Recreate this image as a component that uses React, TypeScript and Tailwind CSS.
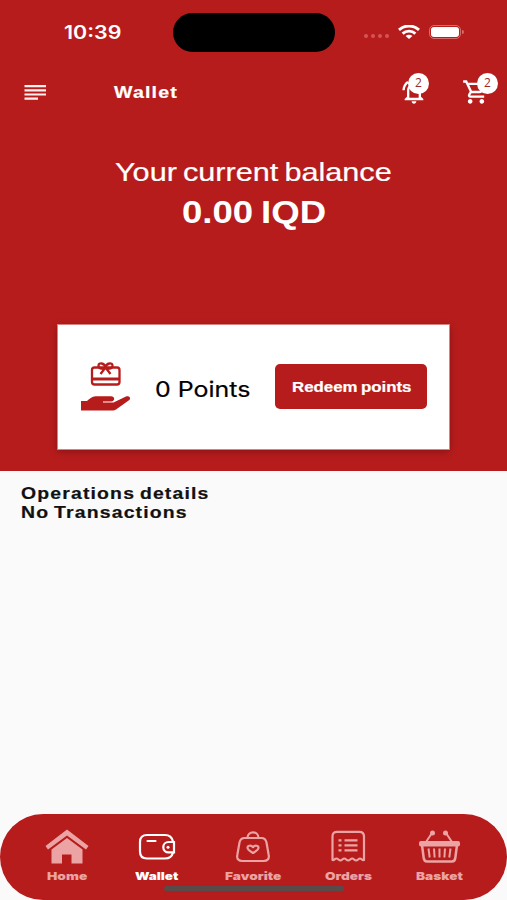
import { useLayoutEffect, useRef, useState } from "react";
import type { ReactNode } from "react";
import { MdOutlineNotificationsActive, MdOutlineShoppingCart } from "react-icons/md";

const SANS = "font-['Liberation_Sans',Arial,sans-serif]";
const INTER = "font-['Inter',sans-serif]";

/** One line of wide-set text, stretched horizontally to fill its box. */
function WideText({ className, children }: { className: string; children: ReactNode }) {
  const box = useRef<HTMLDivElement>(null);
  const text = useRef<HTMLSpanElement>(null);
  const [scale, setScale] = useState(1);
  useLayoutEffect(() => {
    if (box.current && text.current) {
      setScale(box.current.offsetWidth / text.current.offsetWidth);
    }
  }, []);
  return (
    <div ref={box} className={`shrink-0 whitespace-nowrap ${className}`}>
      <span ref={text} className="inline-block origin-left" style={{ transform: `scaleX(${scale})` }}>
        {children}
      </span>
    </div>
  );
}

function StatusBar() {
  return (
    <div className="flex h-16 items-center pl-[64px] pr-[42px]">
      <WideText className={`w-[58px] text-[18.5px] font-semibold leading-6 ${INTER}`}>10:39</WideText>
      <div className="ml-[51px] h-[39px] w-[162px] rounded-full bg-black" />
      <div className="ml-[29px] mt-2 flex gap-[3px]">
        {[0, 1, 2, 3].map((i) => (
          <span key={i} className="size-1 rounded-full bg-[#d25555]" />
        ))}
      </div>
      <svg className="ml-[9px] h-[14px] w-[22px]" viewBox="0 0 22 14" fill="none" stroke="white" strokeWidth="2.9">
        <path d="M1 4.8C6.8-.3 15.2-.3 21 4.8" />
        <path d="M4.6 8.600c3.700-3.300 9.100-3.300 12.800 0" />
        <path d="M7.600 11c2-1.800 4.800-1.800 6.800 0L11 14Z" fill="white" stroke="none" />
      </svg>
      <div className="ml-[9px] flex items-center gap-px">
        <div className="h-[14px] w-[32px] rounded-[5px] border border-[#d96a6a] p-px">
          <div className="h-full w-full rounded-[3px] bg-white" />
        </div>
        <span className="h-1 w-[2px] rounded-r-full bg-[#d96a6a]" />
      </div>
    </div>
  );
}

function Badge({ className }: { className: string }) {
  return (
    <span className={`absolute flex size-[21px] items-center justify-center rounded-full bg-white pb-[2px] font-['Open_Sans',sans-serif] text-[12px] text-[#9c2a2a] ${className}`}>
      2
    </span>
  );
}

function Toolbar() {
  return (
    <div className="flex h-14 items-center pl-[24px]">
      <svg className="h-4 w-[22px]" viewBox="0 0 22 16" fill="#fff0f0">
        <path d="M.5 1h21.500v2.200H.5ZM.5 5.200h21.500v2.200H.5ZM.5 9.400h21.500v2.200H.5ZM.5 13.600h13.500v2.200H.5Z" />
      </svg>
      <WideText className={`ml-[68px] w-[64px] text-[16.5px] font-bold leading-6 tracking-[1px] [-webkit-text-stroke:0.2px] ${SANS}`}>
        Wallet
      </WideText>
      <div className="relative ml-[222px] size-[28px]">
        <MdOutlineNotificationsActive className="size-[28px]" />
        <Badge className="-top-[5px] left-[8px]" />
      </div>
      <div className="relative ml-[34px] size-[28px]">
        <MdOutlineShoppingCart className="size-[28px]" />
        <Badge className="-top-[5px] left-[15px]" />
      </div>
    </div>
  );
}

function GiftHand() {
  return (
    <svg className="h-[50px] w-[52px]" viewBox="0 0 52 50" fill="none" stroke="#b71c1c" strokeWidth="2.300">
      <rect x="12" y="5.500" width="27.500" height="17" rx="2.500" />
      <path d="M12 17h27.500" strokeWidth="3" />
      <path d="M25.500 5.500c-1-5-7-5-7-2s3 4 7 2c4 2 7 1 7-2s-6-3-7 2l-5 6.500M25.500 5.500l5 6.500" />
      <path
        d="M1 39h6c4-3.500 6-4.800 10-4.800h14c4 0 4.500 5 0 5.300h-8v1h10.500l12.500-6c3.500-1 5.500 2 3 3.800L36 47.500c-1 .7-2 1-3 1H1Z"
        fill="#b71c1c"
        stroke="none"
      />
    </svg>
  );
}

function PointsCard() {
  return (
    <section className="ml-[57px] flex h-[126px] w-[393px] items-center border border-[#d98080] bg-white pl-[22px] shadow-[0_2px_7px_rgba(0,0,0,0.25)]">
      <GiftHand />
      <WideText className={`ml-[23px] mt-[6px] w-[95px] text-[21px] leading-7 text-black [-webkit-text-stroke:0.2px] ${INTER}`}>
        0 Points
      </WideText>
      <button className="-mt-px ml-[25px] flex h-[45px] w-[152px] items-center justify-center rounded-[5px] bg-[#b71c1c]">
        <WideText className={`w-[119px] text-left text-[14px] font-bold leading-5 [word-spacing:-1px] [-webkit-text-stroke:0.2px] ${SANS}`}>
          Redeem points
        </WideText>
      </button>
    </section>
  );
}

function HomeIcon() {
  return (
    <svg className="h-[36px] w-[44px]" viewBox="0 0 44 36" fill="currentColor">
      <path d="M22 .5 .5 17l2.500 3.500L22 6.500l19 14 2.500-3.500Z" />
      <path d="M22 9 6.500 20.500V34.500H17v-9h9.500v9H37.500V20.500Z" />
    </svg>
  );
}

function WalletIcon() {
  return (
    <svg className="h-[36px] w-[44px]" viewBox="0 0 44 36" fill="none" stroke="currentColor" strokeWidth="2.200">
      <path d="M39 12.500C38 8 35 6 31 6H13c-4.500 0-7 2.500-7 7v9.500c0 4.500 2.500 7 7 7h18c4.500 0 7-2 8-6" />
      <path d="M40 13h-5.500a5.200 5.200 0 0 0 0 10.400H40Z" />
      <path d="M13.500 12h8" strokeLinecap="round" />
      <circle cx="34" cy="18.200" r="1.500" fill="currentColor" stroke="none" />
    </svg>
  );
}

function FavoriteIcon() {
  return (
    <svg className="h-[36px] w-[44px]" viewBox="0 0 44 36" fill="none" stroke="currentColor" strokeWidth="2.200" strokeLinejoin="round">
      <path d="M13.500 9h17c3 0 4.300 1.500 5 4.500l2.200 12.500c.8 4-1.500 6-5 6H11.300c-3.500 0-5.800-2-5-6L8.500 13.500c.7-3 2-4.500 5-4.500Z" />
      <path d="M16.500 9c0-7.500 11-7.500 11 0" />
      <path d="M22 24c-3-1.800-5.500-3.200-5.500-5.300s3.500-3 5.500-.5c2-2.500 5.500-1.600 5.500.5s-2.500 3.500-5.500 5.300Z" />
    </svg>
  );
}

function OrdersIcon() {
  return (
    <svg className="h-[36px] w-[44px]" viewBox="0 0 44 36" fill="none" stroke="currentColor" strokeWidth="2.200" strokeLinejoin="round">
      <path d="M6.500 31V7.500c0-3 1.500-4.700 4.500-4.700h22.500c3 0 4.500 1.700 4.500 4.700V31c-1.800.6-2.400-1.500-4-1.500s-2.200 2-3.900 2-2.300-2-3.900-2-2.300 2-4 2-2.200-2-3.900-2-2.300 2-3.900 2-2.300-2-4-2-2.200 2-3.800 1.500Z" />
      <path d="M12.500 11.300h3m-3 5h3m-3 5h3m3-10h13m-13 5h13m-13 5h13" />
    </svg>
  );
}

function BasketIcon() {
  return (
    <svg className="h-[36px] w-[44px]" viewBox="0 0 44 36" fill="none" stroke="currentColor" strokeWidth="2">
      <path d="m9 13 6-9m20 9-6-9" />
      <circle cx="15.500" cy="4" r="2.500" fill="currentColor" stroke="none" />
      <circle cx="28.500" cy="4" r="2.500" fill="currentColor" stroke="none" />
      <rect x="2" y="12" width="41" height="5.500" rx="2" fill="currentColor" stroke="none" />
      <path d="m5 16 1.700 13c.3 2 1.300 3.500 3.300 3.500h25c2 0 3-1.500 3.300-3.500L40 16" strokeWidth="2.500" />
      <path d="m11.500 19.500 1.200 9M17 19.500l.6 9M22.500 19.500v9m5.500-9-.6 9M33.500 19.500l-1.200 9" />
    </svg>
  );
}

const LABEL = "text-[11px] leading-[14px] font-black font-['Inter',sans-serif]";

function BottomNav() {
  return (
    <nav className="relative flex h-[86px] w-full rounded-[43px] bg-[#b71c1c] pl-[45px] pt-[15px] text-[#eba3a3]">
      <div className="flex w-[44px] flex-col items-center">
        <HomeIcon />
        <WideText className={`mt-[4px] w-[40px] ${LABEL}`}>Home</WideText>
      </div>
      <div className="ml-[45px] flex w-[44px] flex-col items-center text-white">
        <WalletIcon />
        <WideText className={`mt-[4px] w-[43px] ${LABEL}`}>Wallet</WideText>
      </div>
      <div className="ml-[46px] flex w-[57px] flex-col items-center">
        <FavoriteIcon />
        <WideText className={`mt-[4px] w-[56px] ${LABEL}`}>Favorite</WideText>
      </div>
      <div className="ml-[43px] flex w-[48px] flex-col items-center">
        <OrdersIcon />
        <WideText className={`mt-[4px] w-[47px] ${LABEL}`}>Orders</WideText>
      </div>
      <div className="ml-[43px] flex w-[48px] flex-col items-center">
        <BasketIcon />
        <WideText className={`mt-[4px] w-[47px] ${LABEL}`}>Basket</WideText>
      </div>
      <span className="absolute bottom-[9px] left-[164px] h-[5px] w-[180px] rounded-full bg-[#5b4a4a]" />
    </nav>
  );
}

export default function App() {
  return (
    <main className="flex h-[900px] w-[507px] flex-col overflow-hidden bg-[#fafafa]">
      <header className="h-[471px] shrink-0 bg-[#b71c1c] text-white">
        <StatusBar />
        <Toolbar />
        <div className="flex h-[204px] flex-col items-center pt-[36px]">
          <WideText className={`w-[277px] text-[25px] leading-8 [word-spacing:-2px] [-webkit-text-stroke:0.2px] ${SANS}`}>
            Your current balance
          </WideText>
          <WideText className={`mt-[7px] w-[144px] text-[31px] font-bold leading-9 [word-spacing:-2px] ${SANS}`}>0.00 IQD</WideText>
        </div>
        <PointsCard />
      </header>
      <section className={`flex-1 pl-[21px] pt-[13px] text-[16.5px] font-bold leading-[19px] tracking-[1px] text-[#111] [word-spacing:-1.5px] [-webkit-text-stroke:0.2px] ${SANS}`}>
        <WideText className="w-[188px]">Operations details</WideText>
        <WideText className="w-[167px]">No Transactions</WideText>
      </section>
      <BottomNav />
    </main>
  );
}
